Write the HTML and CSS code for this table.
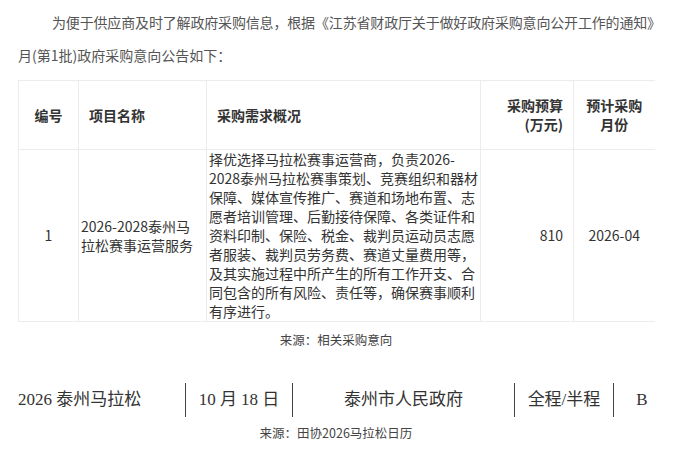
FILE: index.html
```html
<!DOCTYPE html>
<html lang="zh-CN">
<head>
  <meta charset="UTF-8">
  <title>泰州马拉松采购意向</title>
  <link rel="stylesheet" href="styles.css">
</head>
<body>
  <div class="page">
    <p class="intro">
      <span class="indent">为便于供应商及时了解政府采购信息，根据《江苏省财政厅关于做好政府采购意向公开工作的通知》</span><br>
      月(第1批)政府采购意向公告如下：
    </p>

    <table class="plan">
      <colgroup>
        <col style="width: 60px">
        <col style="width: 128px">
        <col style="width: 274px">
        <col style="width: 93px">
        <col style="width: 81px">
      </colgroup>
      <thead>
        <tr>
          <th class="center">编号</th>
          <th>项目名称</th>
          <th>采购需求概况</th>
          <th class="right">采购预算<br>(万元)</th>
          <th class="center">预计采购<br>月份</th>
        </tr>
      </thead>
      <tbody>
        <tr>
          <td class="center">1</td>
          <td>2026-2028泰州马拉松赛事运营服务</td>
          <td class="desc">择优选择马拉松赛事运营商，负责2026-2028泰州马拉松赛事策划、竞赛组织和器材保障、媒体宣传推广、赛道和场地布置、志愿者培训管理、后勤接待保障、各类证件和资料印制、保险、税金、裁判员运动员志愿者服装、裁判员劳务费、赛道丈量费用等，及其实施过程中所产生的所有工作开支、合同包含的所有风险、责任等，确保赛事顺利有序进行。</td>
          <td class="right">810</td>
          <td class="center">2026-04</td>
        </tr>
      </tbody>
    </table>
    <p class="source">来源：相关采购意向</p>

    <div class="race">
      <div class="race-cell race-name">2026 泰州马拉松</div>
      <div class="race-cell race-date">10 月 18 日</div>
      <div class="race-cell race-org">泰州市人民政府</div>
      <div class="race-cell race-type">全程/半程</div>
      <div class="race-cell race-level">B</div>
    </div>
    <p class="source source-last">来源：田协2026马拉松日历</p>
  </div>
</body>
</html>
```

FILE: styles.css
```css
body {
  margin: 0;
  background: #fff;
  font-family: "Noto Sans CJK SC", "Noto Sans", sans-serif;
  color: #333;
}
.page {
  padding: 6px 0 0 18px;
  width: 659px;
}
.intro {
  margin: 0;
  font-size: 14px;
  line-height: 33px;
  color: #555;
  white-space: nowrap;
}
.intro .indent {
  padding-left: 34px;
  letter-spacing: -0.16px;
}
.plan {
  margin-top: 8px;
  border-collapse: collapse;
  table-layout: fixed;
  width: 636px;
  font-size: 14px;
  color: #333;
}
.plan th,
.plan td {
  border: 1px solid #ececec;
  vertical-align: middle;
  text-align: left;
}
.plan tr > :last-child {
  border-right: none;
}
.plan th {
  height: 68px;
  padding: 0 10px;
  font-weight: bold;
  line-height: 19px;
}
.plan td {
  height: 164px;
  padding: 0 2px;
  line-height: 19px;
}
.plan td.desc {
  padding: 0 0 0 2px;
}
.plan .center {
  text-align: center;
}
.plan .right {
  text-align: right;
}
.plan td.right {
  padding-right: 10px;
}
.source {
  margin: 7px 0 0;
  text-align: center;
  font-size: 12.5px;
  line-height: 22px;
  color: #444;
  width: 636px;
}
.race {
  display: flex;
  align-items: center;
  margin-top: 32px;
  height: 34px;
  font-family: "Liberation Serif", "Noto Sans CJK SC", serif;
  font-size: 17px;
  color: #333;
}
.race-cell {
  height: 34px;
  line-height: 34px;
  text-align: center;
}
.race-name {
  width: 167px;
  text-align: left;
}
.race-date,
.race-org,
.race-type {
  border-left: 1.5px solid #444;
}
.race-date {
  width: 106px;
}
.race-org {
  width: 221px;
}
.race-type {
  width: 98px;
  border-right: 1.5px solid #444;
}
.race-level {
  width: 56px;
}
.source-last {
  margin-top: 5px;
}
```
